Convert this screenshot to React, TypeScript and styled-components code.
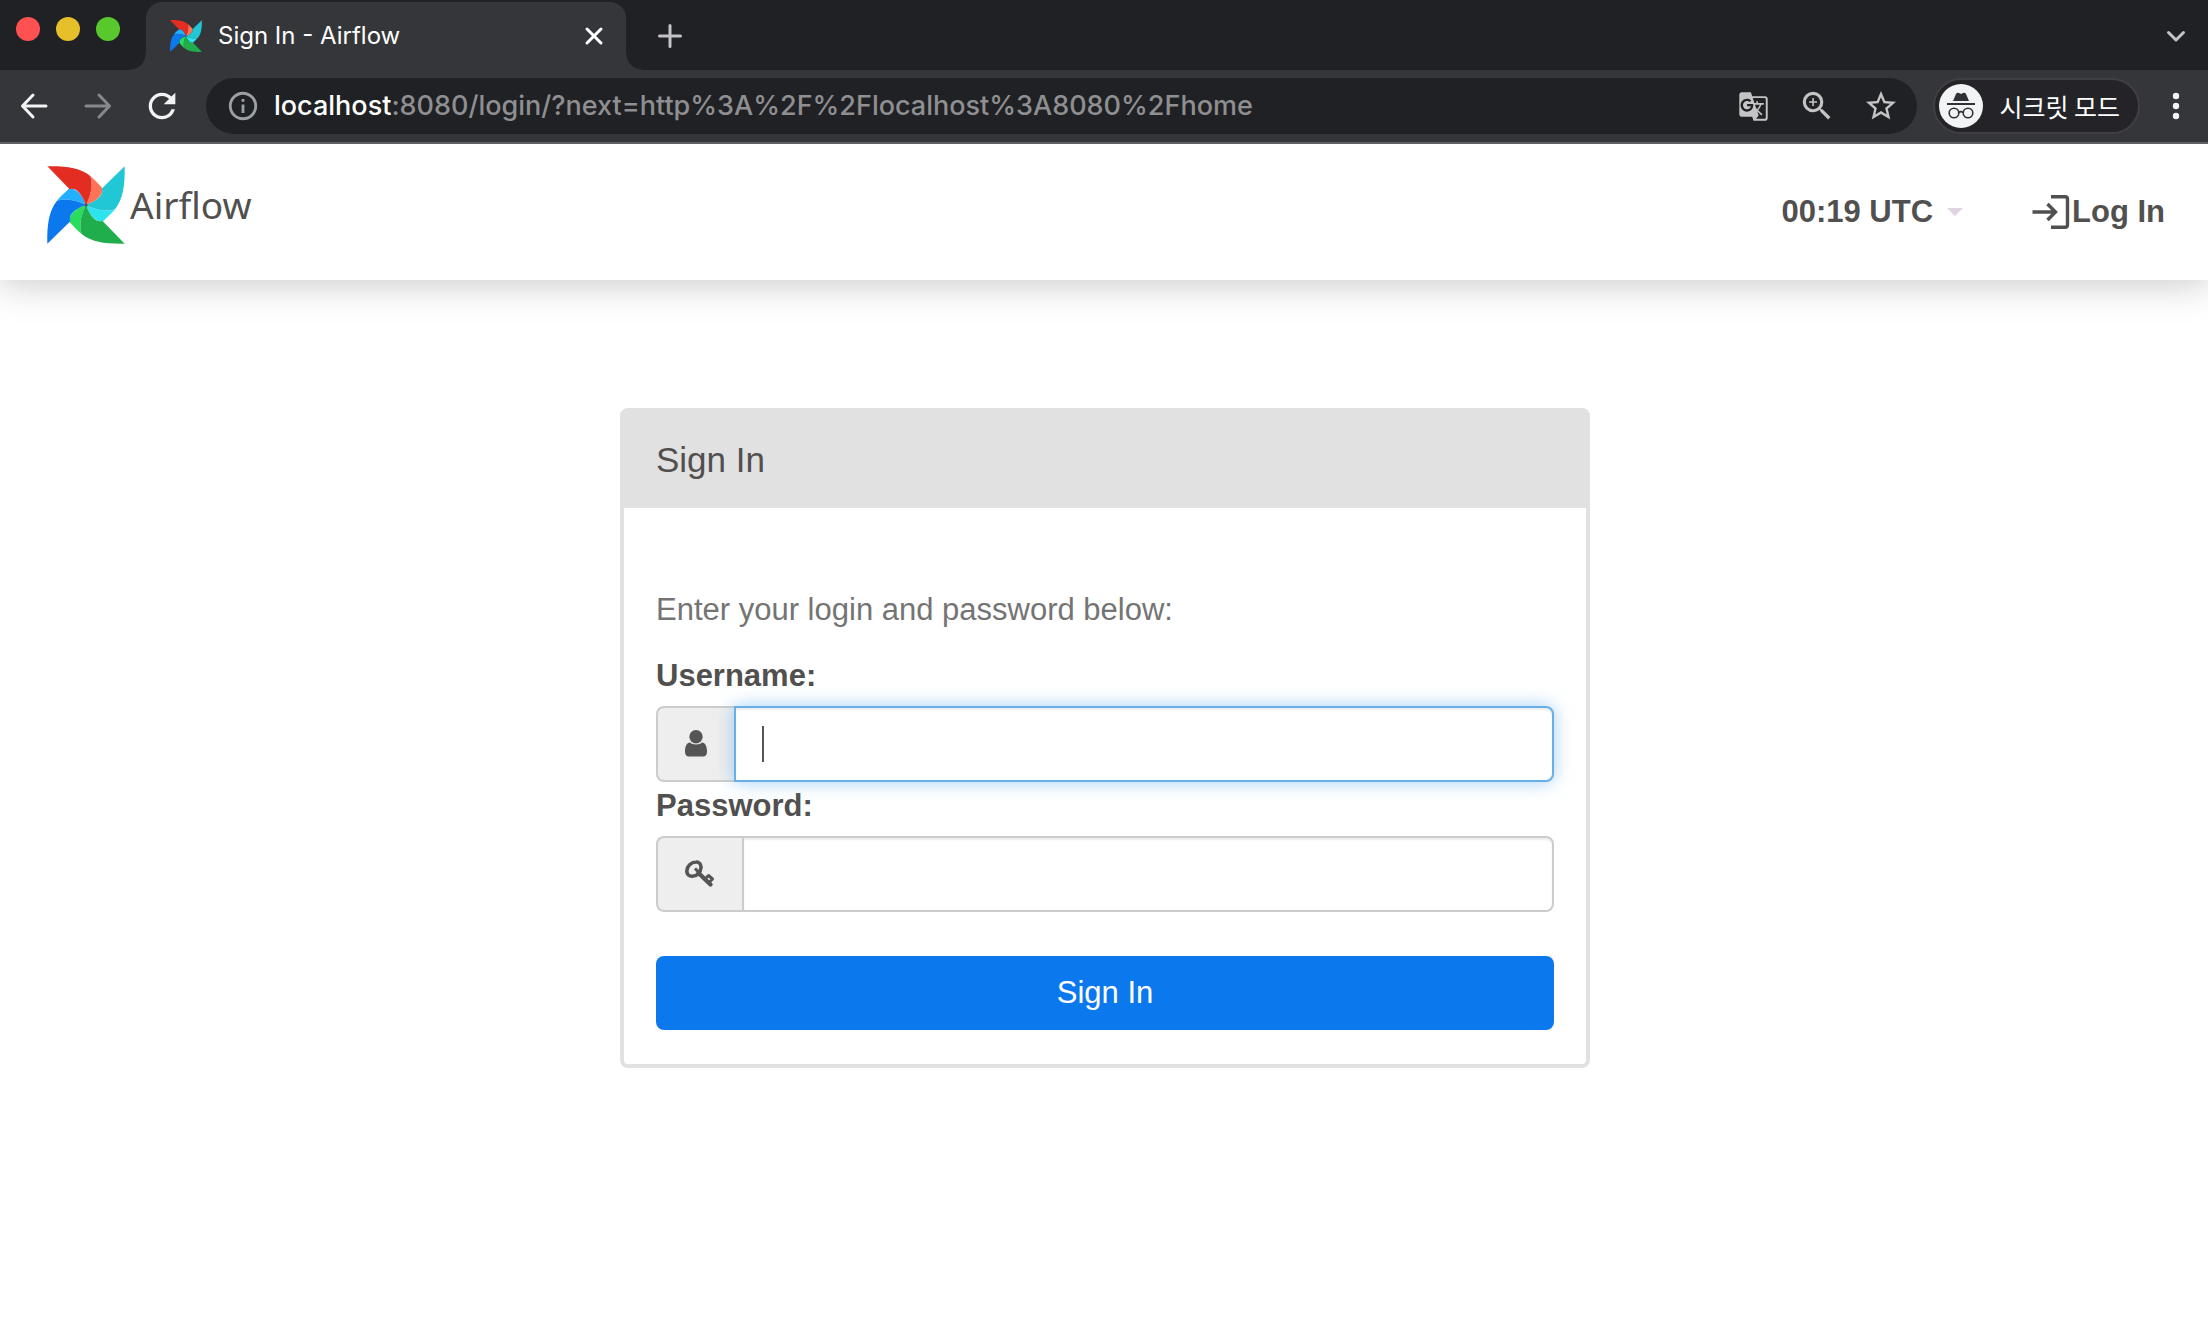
import React from "react";
import styled, { createGlobalStyle, css } from "styled-components";
import { MdGTranslate, MdInfoOutline, MdRefresh, MdStarBorder, MdZoomIn } from "react-icons/md";

const uiFont = `Inter, Roboto, "Noto Sans CJK KR", sans-serif`;
const pageFont = `"Liberation Sans", Arial, sans-serif`;

const GlobalStyle = createGlobalStyle`
  *, *::before, *::after { box-sizing: border-box; }
  body { margin: 0; background: #fff; color: #51504f; font-family: ${pageFont}; }
  button, input { font: inherit; color: inherit; }
  svg { display: block; flex: none; }
`;

/* ---------- browser window ---------- */

const TabStrip = styled.div`
  display: flex;
  align-items: flex-end;
  height: 70px;
  padding: 0 20px 0 16px;
  background: #202124;
  font-family: ${uiFont};
`;

const WindowControls = styled.div`
  display: flex;
  gap: 16px;
  align-self: flex-start;
  width: 130px;
  padding-top: 17px;
`;

const WindowButton = styled.button<{ $color: string }>`
  width: 24px;
  height: 24px;
  padding: 0;
  border: 0;
  border-radius: 50%;
  background: ${(p) => p.$color};
`;

const Tab = styled.div`
  position: relative;
  display: flex;
  align-items: center;
  gap: 16px;
  width: 480px;
  height: 68px;
  padding: 0 20px 0 24px;
  border-radius: 16px 16px 0 0;
  background: #35363a;

  &::before,
  &::after {
    content: "";
    position: absolute;
    bottom: 0;
    width: 16px;
    height: 16px;
  }
  &::before {
    right: 100%;
    background: radial-gradient(circle at 0 0, transparent 15px, #35363a 16px);
  }
  &::after {
    left: 100%;
    background: radial-gradient(circle at 100% 0, transparent 15px, #35363a 16px);
  }
`;

const TabTitle = styled.span`
  flex: 1;
  color: #fff;
  font-size: 24px;
  line-height: 32px;
  white-space: nowrap;
`;

const IconButton = styled.button<{ $size?: number; $color?: string }>`
  display: flex;
  align-items: center;
  justify-content: center;
  flex: none;
  width: ${(p) => p.$size ?? 40}px;
  height: ${(p) => p.$size ?? 40}px;
  padding: 0;
  border: 0;
  background: none;
  color: ${(p) => p.$color ?? "#f1f3f4"};
`;

const StripActions = styled.div`
  display: flex;
  flex: 1;
  align-items: center;
  justify-content: space-between;
  height: 68px;
  padding-left: 32px;
`;

const Toolbar = styled.div`
  position: relative;
  z-index: 1;
  display: flex;
  align-items: center;
  height: 74px;
  padding: 0 12px 0 14px;
  border-bottom: 2px solid #5f6064;
  background: #35363a;
  font-family: ${uiFont};
`;

const NavButtons = styled.div`
  display: flex;
  gap: 24px;
  width: 192px;
`;

const AddressBar = styled.div`
  display: flex;
  flex: 1;
  align-items: center;
  min-width: 0;
  height: 56px;
  padding: 0 16px 0 20px;
  border-radius: 28px;
  background: #202124;
`;

const Address = styled.div`
  flex: 1;
  min-width: 0;
  padding-left: 14px;
  overflow: hidden;
  outline: 0;
  color: #8f8f91;
  font-size: 27px;
  font-weight: 500;
  line-height: 40px;
  white-space: nowrap;
`;

const Host = styled.span`
  color: #fff;
`;

const AddressActions = styled.div`
  display: flex;
  gap: 24px;
`;

const IncognitoChip = styled.button`
  display: flex;
  align-items: center;
  gap: 16px;
  height: 56px;
  margin: 0 16px;
  padding: 0 18px 0 4px;
  border: 2px solid #3f3f44;
  border-radius: 28px;
  background: #242328;
  color: #fff;
  font-family: "Noto Sans CJK KR", sans-serif;
  font-size: 25px;
  line-height: 36px;
  white-space: nowrap;
`;

/* ---------- airflow page ---------- */

const Header = styled.header`
  display: flex;
  align-items: center;
  justify-content: space-between;
  height: 136px;
  padding: 0 43px 0 47px;
  background: #fff;
  box-shadow: 0 2px 36px 2px rgba(0, 0, 0, 0.21);
`;

const Brand = styled.a`
  display: flex;
  align-items: center;
  gap: 5px;
  padding-bottom: 14px;
  color: #51504f;
  font-family: "Noto Sans", sans-serif;
  font-size: 37px;
  line-height: 48px;
  text-decoration: none;
`;

const HeaderMenu = styled.nav`
  display: flex;
  align-items: center;
  gap: 69px;
`;

const menuItem = css`
  display: flex;
  align-items: center;
  padding: 0;
  border: 0;
  background: none;
  color: #51504f;
  font-family: ${pageFont};
  font-size: 31px;
  font-weight: 700;
  line-height: 44px;
  text-decoration: none;
  white-space: nowrap;
`;

const ClockButton = styled.button`
  ${menuItem}
  gap: 14px;
`;

const LoginLink = styled.a`
  ${menuItem}
  gap: 2px;
`;

const Caret = styled.span`
  border: 8px solid transparent;
  border-top-color: #e0d3e2;
  border-bottom: 0;
`;

const Main = styled.main`
  display: flex;
  justify-content: center;
  padding: 128px 30px 128px 32px;
`;

const Panel = styled.section`
  width: 100%;
  max-width: 970px;
  border: 4px solid #e1e1e1;
  border-radius: 8px;
`;

const PanelHeading = styled.h1`
  margin: 0;
  padding: 26px 32px;
  background: #e1e1e1;
  font-size: 35px;
  font-weight: 400;
  line-height: 44px;
`;

const Form = styled.form`
  padding: 79px 32px 34px;
  font-size: 31px;
  line-height: 46px;
`;

const Hint = styled.p`
  margin: 0 0 20px;
  color: #747474;
`;

const Label = styled.label`
  display: block;
  margin-bottom: 7px;
  font-weight: 700;
`;

const InputGroup = styled.div`
  position: relative;
  display: flex;
  height: 76px;
  margin-bottom: 1px;
`;

const Addon = styled.span`
  display: flex;
  align-items: center;
  padding: 0 27px;
  border: 2px solid #ccc;
  border-right: 0;
  border-radius: 8px 0 0 8px;
  background: #eee;
  color: #555;
`;

const TextInput = styled.input`
  position: relative;
  flex: 1;
  min-width: 0;
  padding: 0 26px;
  border: 2px solid #ccc;
  border-radius: 0 8px 8px 0;
  outline: 0;
  background: #fff;
  box-shadow: inset 0 2px 2px rgba(0, 0, 0, 0.075);
  caret-color: transparent;

  &:focus {
    border-color: #66afe9;
    box-shadow: inset 0 2px 2px rgba(0, 0, 0, 0.075), 0 0 18px rgba(102, 175, 233, 0.6);
  }
`;

const TextCursor = styled.span`
  position: absolute;
  top: 20px;
  left: 106px;
  width: 2px;
  height: 36px;
  background: #555;
`;

const SubmitButton = styled.button`
  display: block;
  width: 100%;
  height: 74px;
  margin-top: 44px;
  padding: 0;
  border: 0;
  border-radius: 8px;
  background: #0c78ee;
  color: #fff;
`;

/* ---------- drawings ---------- */

const blades = [
  { turn: 0, main: "#e32d22", fold: "#ff7458" },
  { turn: 90, main: "#22c7d6", fold: "#2ce3ee" },
  { turn: 180, main: "#1fae4b", fold: "#28dc5c" },
  { turn: 270, main: "#0b78ee", fold: "#23b1ff" },
];

function Pinwheel({ size }: { size: number }) {
  return (
    <svg width={size} height={size} viewBox="-117 -117 234 234" aria-hidden="true">
      {blades.map((b) => (
        <path
          key={b.fold}
          fill={b.fold}
          transform={`rotate(${b.turn})`}
          d="M13-87C27-76 38-62 47-53Q51-48 49-42C46-22 22-8 0 0C14-25 22-62 13-87Z"
        />
      ))}
      {blades.map((b) => (
        <path
          key={b.main}
          fill={b.main}
          transform={`rotate(${b.turn})`}
          d="M-116-116C-60-117-18-112 13-87C22-62 14-25 0 0C-8-22-22-46-38-48Q-44-50-49-47Z"
        />
      ))}
      <circle r="5" fill="#51504f" />
    </svg>
  );
}

type StrokeProps = { size: number; d: string; width: number };

function StrokeIcon({ size, d, width }: StrokeProps) {
  return (
    <svg
      width={size}
      height={size}
      viewBox={`0 0 ${size} ${size}`}
      fill="none"
      stroke="currentColor"
      strokeWidth={width}
      strokeLinecap="round"
      strokeLinejoin="round"
      aria-hidden="true"
    >
      <path d={d} />
    </svg>
  );
}

function IncognitoIcon() {
  return (
    <svg width="44" height="44" viewBox="0 0 44 44" aria-hidden="true">
      <circle cx="22" cy="22" r="22" fill="#f1f3f4" />
      <path fill="#303136" d="M14 17L17 10Q18 8 20 9L22 10L24 9Q26 8 27 10L30 17Z" />
      <path fill="#303136" d="M8 19H36V21H8Z" />
      <g fill="none" stroke="#303136" strokeWidth="1.6">
        <circle cx="15" cy="29" r="4.8" />
        <circle cx="29" cy="29" r="4.8" />
        <path d="M19.8 28.5Q22 26.8 24.2 28.5" />
      </g>
    </svg>
  );
}

function LoginIcon() {
  return (
    <svg width="38" height="36" viewBox="0 0 38 36" fill="none" stroke="currentColor" strokeWidth="3.4" aria-hidden="true">
      <path d="M0.5 18H24M15.5 10L23.5 18L15.5 26" />
      <path d="M19 2.7H33Q35.5 2.7 35.5 5.2V30.8Q35.5 33.3 33 33.3H19" />
    </svg>
  );
}

function UserIcon() {
  return (
    <svg width="22" height="28" viewBox="0 0 22 28" fill="currentColor" aria-hidden="true">
      <circle cx="11" cy="6.7" r="6.7" />
      <path d="M5 12.5C7 15 15 15 17 12.5C20.5 12.5 22 17 22 21.5Q22 26.5 18 26.5H4Q0 26.5 0 21.5C0 17 1.5 12.5 5 12.5Z" />
    </svg>
  );
}

function KeyIcon() {
  return (
    <svg width="30" height="28" viewBox="0 0 30 28" fill="none" stroke="currentColor" aria-hidden="true">
      <path
        strokeWidth="3.6"
        d="M11 2C14 1.8 16.2 4 16 7.5C15.6 12.5 12 16 7.5 16.2C4 16.4 1.8 14.5 1.8 11C2 6 6 2.2 11 2Z"
      />
      <path strokeWidth="3" d="M10 8.5L13.5 12" />
      <path strokeWidth="4.4" strokeLinecap="round" d="M13.5 13L25.5 24.5" />
      <path strokeWidth="3" strokeLinecap="round" d="M20 19L23 16M23.5 15.5L27.5 19M24.5 22L27 19.5" />
    </svg>
  );
}

/* ---------- app ---------- */

export default function App() {
  return (
    <>
      <GlobalStyle />
      <TabStrip>
        <WindowControls>
          <WindowButton $color="#ff5152" aria-label="Close window" />
          <WindowButton $color="#e6c02a" aria-label="Minimize window" />
          <WindowButton $color="#59c82c" aria-label="Zoom window" />
        </WindowControls>
        <Tab>
          <Pinwheel size={32} />
          <TabTitle>Sign In - Airflow</TabTitle>
          <IconButton $size={24} $color="#fff" aria-label="Close tab">
            <StrokeIcon size={20} d="M3 3L17 17M17 3L3 17" width={3} />
          </IconButton>
        </Tab>
        <StripActions>
          <IconButton $size={24} $color="#c3c3c8" aria-label="New tab">
            <StrokeIcon size={24} d="M12 1.5V22.5M1.5 12H22.5" width={3} />
          </IconButton>
          <IconButton $size={24} $color="#c3c3c8" aria-label="Search tabs">
            <StrokeIcon size={24} d="M4.5 8.5L12 16L19.5 8.5" width={3} />
          </IconButton>
        </StripActions>
      </TabStrip>
      <Toolbar>
        <NavButtons>
          <IconButton aria-label="Back">
            <StrokeIcon size={28} d="M26 14H3M13 3L2.5 14L13 25" width={3} />
          </IconButton>
          <IconButton $color="#87888b" aria-label="Forward">
            <StrokeIcon size={28} d="M2 14H25M15 3L25.5 14L15 25" width={3} />
          </IconButton>
          <IconButton aria-label="Reload">
            <MdRefresh size={40} />
          </IconButton>
        </NavButtons>
        <AddressBar>
          <IconButton $size={34} $color="#9aa0a6" aria-label="Site information">
            <MdInfoOutline size={34} />
          </IconButton>
          <Address role="textbox" aria-label="Address" tabIndex={0}>
            <Host>localhost</Host>:8080/login/?next=http%3A%2F%2Flocalhost%3A8080%2Fhome
          </Address>
          <AddressActions>
            <IconButton $color="#c4c4c4" aria-label="Translate this page">
              <MdGTranslate size={31} />
            </IconButton>
            <IconButton $color="#c4c4c4" aria-label="Zoom">
              <MdZoomIn size={38} />
            </IconButton>
            <IconButton $color="#c4c4c4" aria-label="Bookmark this tab">
              <MdStarBorder size={36} />
            </IconButton>
          </AddressActions>
        </AddressBar>
        <IncognitoChip>
          <IncognitoIcon />
          시크릿 모드
        </IncognitoChip>
        <IconButton $size={40} aria-label="Menu">
          <svg width="8" height="28" viewBox="0 0 8 28" fill="currentColor" aria-hidden="true">
            <circle cx="4" cy="4" r="3.2" />
            <circle cx="4" cy="14" r="3.2" />
            <circle cx="4" cy="24" r="3.2" />
          </svg>
        </IconButton>
      </Toolbar>

      <Header>
        <Brand href="#">
          <Pinwheel size={78} />
          Airflow
        </Brand>
        <HeaderMenu>
          <ClockButton>
            00:19 UTC
            <Caret />
          </ClockButton>
          <LoginLink href="#">
            <LoginIcon />
            Log In
          </LoginLink>
        </HeaderMenu>
      </Header>

      <Main>
        <Panel>
          <PanelHeading>Sign In</PanelHeading>
          <Form onSubmit={(e: React.FormEvent) => e.preventDefault()}>
            <Hint>Enter your login and password below:</Hint>
            <Label htmlFor="username">Username:</Label>
            <InputGroup>
              <Addon>
                <UserIcon />
              </Addon>
              <TextInput id="username" type="text" autoFocus />
              <TextCursor />
            </InputGroup>
            <Label htmlFor="password">Password:</Label>
            <InputGroup>
              <Addon>
                <KeyIcon />
              </Addon>
              <TextInput id="password" type="password" />
            </InputGroup>
            <SubmitButton type="submit">Sign In</SubmitButton>
          </Form>
        </Panel>
      </Main>
    </>
  );
}
